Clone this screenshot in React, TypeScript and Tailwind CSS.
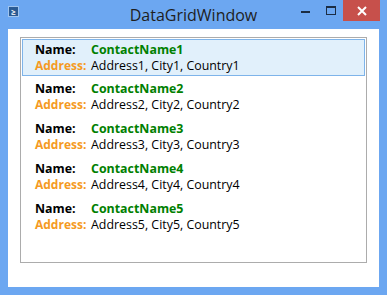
import React from 'react'

const contacts = [1, 2, 3, 4, 5].map(i => ({
    name: `ContactName${i}`,
    address: `Address${i}, City${i}, Country${i}`
}))

const App = () => {
    return (
        <div className="w-[387px] h-[295px] bg-[#6ca7f1] flex flex-col overflow-hidden" style={{ fontFamily: '"Open Sans", "Noto Sans", sans-serif' }}>
            <div className="h-[29px] flex items-start relative">
                <div className="mt-[6px] ml-[8px] w-[11px] h-[11px] bg-[#2a5a93] border border-[#9fc4ee] flex items-center justify-center">
                    <span className="text-white text-[8px] leading-none font-bold">≥</span>
                </div>
                <div className="absolute left-0 right-0 top-[3px] text-center text-[16px] text-[#1e1e1e]">DataGridWindow</div>
                <div className="ml-auto flex items-start">
                    <div className="w-[25px] h-[21px] flex items-center justify-center">
                        <div className="w-[9px] h-[2px] bg-[#1c2d44] mt-[2px]" />
                    </div>
                    <div className="w-[25px] h-[21px] flex items-center justify-center">
                        <div className="w-[10px] h-[9px] border border-[#1c2d44] border-t-2" />
                    </div>
                    <div className="w-[37px] h-[21px] bg-[#c7504b] flex items-center justify-center mr-[7px]">
                        <svg width="10" height="10" viewBox="0 0 10 10">
                            <path d="M1 1 L9 9 M9 1 L1 9" stroke="white" strokeWidth="2" />
                        </svg>
                    </div>
                </div>
            </div>
            <div className="mx-[8px] h-[258px] bg-white pt-[8px] px-[12px]">
                <div className="h-[226px] border border-[#acacac] p-[1px]">
                    {contacts.map((c, i) => (
                        <div
                            key={c.name}
                            className={`pl-[12px] pt-[2px] text-[12.4px] leading-[16px] border ${i === 0 ? 'bg-[#e1f0fb] border-[#7eb4ea] h-[37px] mb-[2px]' : 'border-transparent h-[40px]'}`}
                        >
                            <div className="flex">
                                <span className="w-[56px] font-bold text-black">Name:</span>
                                <span className="font-bold text-[#008000]">{c.name}</span>
                            </div>
                            <div className="flex">
                                <span className="w-[56px] text-[12px] font-bold text-[#f59a23]">Address:</span>
                                <span className="text-black">{c.address}</span>
                            </div>
                        </div>
                    ))}
                </div>
            </div>
        </div>
    )
}

export default App
